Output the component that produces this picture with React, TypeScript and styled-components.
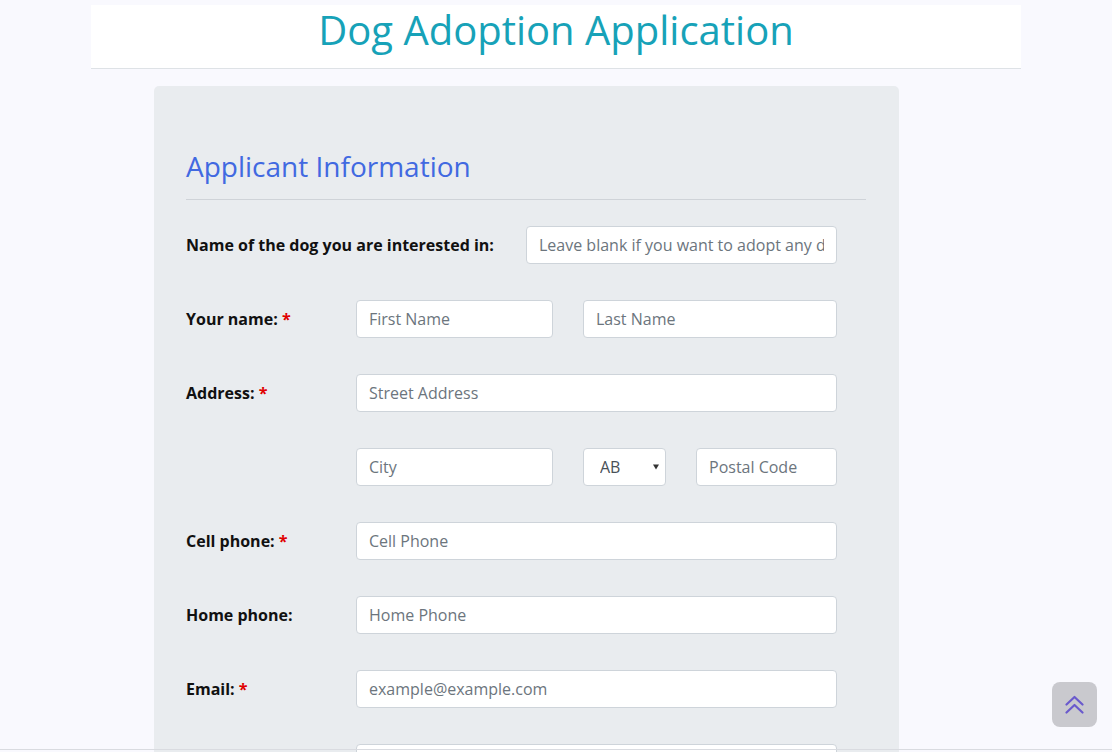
import React from 'react';
import styled, { createGlobalStyle } from 'styled-components';

const GlobalStyle = createGlobalStyle`
  html, body {
    margin: 0;
    padding: 0;
    background: #f9f9fe;
    font-family: "Open Sans", "Liberation Sans", sans-serif;
    color: #212529;
  }
  * { box-sizing: border-box; }
`;

const Container = styled.div`
  width: 930px;
  margin: 0 auto;
  padding-top: 5px;
`;

const Header = styled.header`
  background: #ffffff;
  height: 64px;
  border-bottom: 1px solid #dee2e6;
  display: flex;
  align-items: center;
  justify-content: center;
`;

const Title = styled.h1`
  margin: 0;
  font-size: 40px;
  font-weight: 400;
  color: #17a2b8;
  line-height: 1;
  padding-bottom: 14px;
`;

const Card = styled.section`
  margin: 17px 0 0 63px;
  width: 745px;
  background: #e9ecef;
  border-radius: 5px;
  padding: 63px 33px 40px 32px;
`;

const SectionTitle = styled.h2`
  margin: 0;
  font-size: 28px;
  font-weight: 400;
  color: #4169e1;
  line-height: 34px;
`;

const Divider = styled.hr`
  margin: 16px 0 26px;
  border: 0;
  border-top: 1px solid #cfd3d8;
`;

const Rows = styled.div`
  display: flex;
  flex-direction: column;
  gap: 36px;
`;

const Row = styled.div`
  display: flex;
  align-items: center;
`;

const Label = styled.label<{ $width?: number }>`
  width: ${p => p.$width ?? 170}px;
  flex-shrink: 0;
  font-size: 16px;
  font-weight: 700;
  color: #111;
`;

const Required = styled.span`
  color: #e00000;
`;

const Fields = styled.div`
  display: flex;
  gap: 30px;
`;

const Input = styled.input<{ $width: number }>`
  width: ${p => p.$width}px;
  height: 38px;
  padding: 0 12px;
  border: 1px solid #ced4da;
  border-radius: 4px;
  background: #fff;
  font-family: "Open Sans", "Liberation Sans", sans-serif;
  font-size: 16px;
  color: #495057;
  outline: none;
  &::placeholder { color: #6c757d; }
`;

const SelectWrap = styled.div`
  position: relative;
  width: 83px;
  height: 38px;
`;

const Select = styled.select`
  appearance: none;
  width: 100%;
  height: 100%;
  padding: 0 0 0 16px;
  border: 1px solid #ced4da;
  border-radius: 4px;
  background: #fff;
  font-family: "Open Sans", "Liberation Sans", sans-serif;
  font-size: 16px;
  color: #495057;
`;

const Caret = styled.span`
  position: absolute;
  right: 7px;
  top: 50%;
  transform: translateY(-50%);
  width: 0;
  height: 0;
  border-left: 3px solid transparent;
  border-right: 3px solid transparent;
  border-top: 5px solid #333;
  pointer-events: none;
`;

const BottomLine = styled.div`
  position: fixed;
  left: 0;
  right: 0;
  bottom: 2px;
  height: 1px;
  background: #d9dbe0;
`;

const TopButton = styled.button`
  position: fixed;
  right: 15px;
  bottom: 25px;
  width: 45px;
  height: 45px;
  border: none;
  border-radius: 8px;
  background: #c9c9ce;
  color: #6a5acd;
  display: flex;
  align-items: center;
  justify-content: center;
  padding: 0;
`;

const DoubleChevron: React.FC = () => (
  <svg width="19" height="19" viewBox="0 0 19 19" fill="none" stroke="currentColor" strokeWidth="2.2" strokeLinecap="round" strokeLinejoin="round">
    <path d="M1.5 9.5 L9.5 2 L17.5 9.5" />
    <path d="M1.5 17.5 L9.5 10 L17.5 17.5" />
  </svg>
);

const App: React.FC = () => (
  <>
    <GlobalStyle />
    <Container>
      <Header>
        <Title>Dog Adoption Application</Title>
      </Header>
      <Card>
        <SectionTitle>Applicant Information</SectionTitle>
        <Divider />
        <Rows>
          <Row>
            <Label $width={340}>Name of the dog you are interested in:</Label>
            <Input $width={311} placeholder="Leave blank if you want to adopt any dog" />
          </Row>
          <Row>
            <Label>Your name: <Required>*</Required></Label>
            <Fields>
              <Input $width={197} placeholder="First Name" />
              <Input $width={254} placeholder="Last Name" />
            </Fields>
          </Row>
          <Row>
            <Label>Address: <Required>*</Required></Label>
            <Input $width={481} placeholder="Street Address" />
          </Row>
          <Row>
            <Label />
            <Fields>
              <Input $width={197} placeholder="City" />
              <SelectWrap>
                <Select defaultValue="AB">
                  <option>AB</option>
                  <option>BC</option>
                  <option>MB</option>
                  <option>ON</option>
                </Select>
                <Caret />
              </SelectWrap>
              <Input $width={141} placeholder="Postal Code" />
            </Fields>
          </Row>
          <Row>
            <Label>Cell phone: <Required>*</Required></Label>
            <Input $width={481} placeholder="Cell Phone" />
          </Row>
          <Row>
            <Label>Home phone:</Label>
            <Input $width={481} placeholder="Home Phone" />
          </Row>
          <Row>
            <Label>Email: <Required>*</Required></Label>
            <Input $width={481} placeholder="example@example.com" />
          </Row>
          <Row>
            <Label />
            <Input $width={481} placeholder="" />
          </Row>
        </Rows>
      </Card>
    </Container>
    <BottomLine />
    <TopButton aria-label="Back to top">
      <DoubleChevron />
    </TopButton>
  </>
);

export default App;
